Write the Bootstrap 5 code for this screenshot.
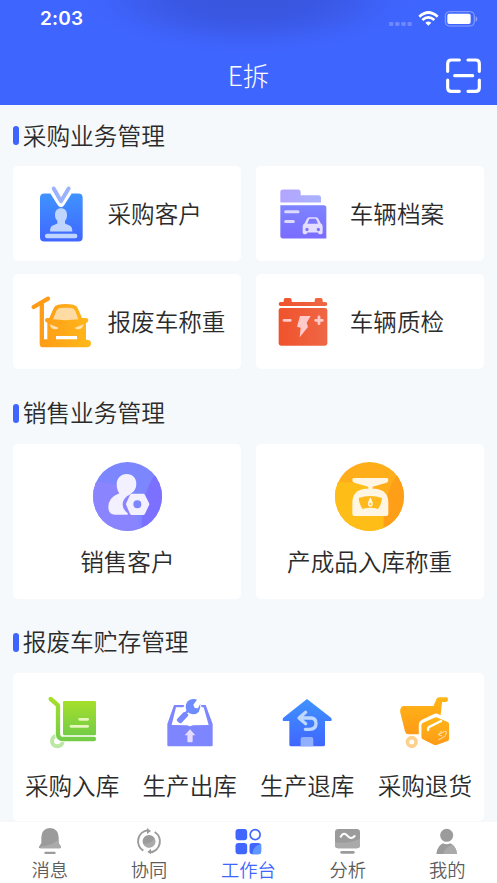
<!DOCTYPE html>
<html lang="zh-CN">
<head>
<meta charset="utf-8">
<meta name="viewport" content="width=device-width, initial-scale=1">
<title>E拆</title>
<link href="https://cdn.jsdelivr.net/npm/bootstrap@5.3.0/dist/css/bootstrap.min.css" rel="stylesheet">
<style>
  body { background: #f5f9fc; color: #2b2b2b; font-family: "Noto Sans CJK SC", sans-serif; font-weight: 350; height: 883px; overflow: hidden; }
  svg { display: block; flex: none; }
  .app-head { height: 105px; color: #fff; background: radial-gradient(ellipse 170px 58px at 248px -4px, #3955dc 0, #3957e2 40%, #3c5def 65%, #3e63fb 85%, #3f65ff 100%) #3f65ff; }
  .status-bar { height: 37px; padding-left: 40px; padding-right: 19px; }
  .clock { font: 600 19px/37px Inter, sans-serif; letter-spacing: .2px; }
  .title-bar { height: 67px; display: grid; grid-template-columns: 1fr auto 1fr; padding: 9px 15px 0; }
  .title-bar h1 { grid-column: 2; font-size: 26.5px; line-height: 58px; font-weight: 300; }
  .title-bar h1 { transform: translateY(-.5px); }
  main { padding: 0 13.3px; height: 717px; overflow: hidden; }
  .sec { height: 61px; font-size: 23.7px; line-height: 61px; font-weight: 350; gap: 4px; }
  .sec span { margin-top: -1px; }
  .sec::before { content: ""; width: 5.4px; height: 19px; border-radius: 3px; background: #3f65ff; }
  .sec-gap { margin-top: 13.5px !important; }
  .sec-low { margin-top: 13px !important; }
  .tiles { display: grid; grid-template-columns: 1fr 1fr; gap: 13.3px 14.2px; }
  .tile { background: #fff; border-radius: 5px; font-size: 23.6px; line-height: 36px; white-space: nowrap; }
  .tile-h { height: 95px; padding-left: 14.7px; gap: 13.5px; }
  .tile-h span { margin-top: -2px; }
  .tile-v { height: 155px; padding-top: 18px; gap: 12.5px; }
  .tile-4 { height: 148px; padding-top: 19px; }
  .tile-4 > div { gap: 15px; }
  .tabs { height: 61px; background: #fff; color: #5c5c5c; font-size: 18.3px; line-height: 26px; padding-top: 4px; }
  .tabs .now { color: #3f65ff; }
</style>
<script src="https://cdn.jsdelivr.net/npm/bootstrap@5.3.0/dist/js/bootstrap.bundle.min.js"></script>
</head>
<body>
<svg width="0" height="0" class="position-absolute" aria-hidden="true">
  <defs>
    <linearGradient id="blue" x1="0" y1="0" x2="0" y2="1"><stop stop-color="#3f93ff"/><stop offset="1" stop-color="#4066ff"/></linearGradient>
    <linearGradient id="violet" x1="0" y1="0" x2="0" y2="1"><stop stop-color="#7d84ff"/><stop offset="1" stop-color="#7a6cff"/></linearGradient>
    <linearGradient id="lilac"><stop stop-color="#b3a5ff"/><stop offset="1" stop-color="#a9b3ff"/></linearGradient>
    <linearGradient id="orange"><stop stop-color="#ff9c17"/><stop offset="1" stop-color="#ffb81a"/></linearGradient>
    <linearGradient id="orangeDown" x1="0" y1="0" x2="0" y2="1"><stop stop-color="#ffb617"/><stop offset="1" stop-color="#ff9a17"/></linearGradient>
    <linearGradient id="red"><stop stop-color="#ef532c"/><stop offset="1" stop-color="#ef6745"/></linearGradient>
    <linearGradient id="green" x1="0" y1="0" x2="0" y2="1"><stop stop-color="#a5df2b"/><stop offset="1" stop-color="#74cd47"/></linearGradient>
    <clipPath id="disc"><circle cx="103.5" cy="103.5" r="103.5"/></clipPath>
  </defs>
</svg>

<header class="app-head">
  <div class="status-bar d-flex justify-content-between align-items-center">
    <span class="clock">2:03</span>
    <svg width="90" height="18" viewBox="424 30 270 54">
      <g fill="#6f89ff"><rect x="427" y="66" width="13" height="12" rx="4"/><rect x="445.500" y="66" width="13" height="12" rx="4"/><rect x="464" y="66" width="13" height="12" rx="4"/><rect x="482.500" y="66" width="13" height="12" rx="4"/></g>
      <g fill="none" stroke="#fff" stroke-width="8"><path d="M518 50Q545 25 573 50M527 60Q545 44 563 60"/></g>
      <path d="M536 68q9-7 18 0l-9 9z" fill="#fff"/>
      <rect x="596" y="35" width="87" height="43" rx="12" fill="none" stroke="#8ea3ff" stroke-width="3"/>
      <rect x="602" y="41" width="70" height="31" rx="6" fill="#fff"/>
      <path d="M687 49q5 2 5 8t-5 8z" fill="#8ea3ff"/>
    </svg>
  </div>
  <div class="title-bar align-items-center">
    <h1 class="m-0">E拆</h1>
    <svg class="ms-auto" width="37" height="37" viewBox="594 170 111 111" fill="none" stroke="#fff" stroke-width="9.500" stroke-linecap="round" stroke-linejoin="round">
      <path d="M602 213v-23q0-11 11-11h24M663 179h23q11 0 11 11v23M697 239v23q0 11-11 11h-23M637 273h-24q-11 0-11-11v-23M623 226h54"/>
    </svg>
  </div>
</header>

<main>
  <h2 class="sec d-flex align-items-center m-0"><span>采购业务管理</span></h2>
  <div class="tiles">
    <div class="tile tile-h d-flex align-items-center">
      <svg width="66" height="66" viewBox="54 61.500 198 198">
        <path d="M103 99h18l23 36q9 10 18 0l23-36h20q13 0 13 13v118q0 13-13 13H103q-13 0-13-13V112q0-13 13-13z" fill="url(#blue)"/>
        <path d="M131 84l22 38 23-38" fill="none" stroke="#9bb2ff" stroke-width="12" stroke-linecap="round" stroke-linejoin="round"/>
        <path d="M135 163c0-13 7-20 18-20s18 7 18 20c0 9-2 14-6 18v8l15 7q7 4 7 17h-67q0-13 7-17l15-7v-8c-5-5-7-9-7-18z" fill="#bfd5ff"/>
        <rect x="105" y="220" width="97" height="13" rx="6" fill="#bfd5ff"/>
      </svg>
      <span>采购客户</span>
    </div>
    <div class="tile tile-h d-flex align-items-center">
      <svg width="66" height="66" viewBox="55 61.500 198 198">
        <path d="M86 126V95q0-8 8-8h45q8 0 8 8v9h53q8 0 8 8v14z" fill="url(#lilac)"/>
        <path d="M86 134h130q8 0 8 8v92H94q-8 0-8-8z" fill="url(#violet)"/>
        <path d="M102 154h37M102 183h23" stroke="#ddd9ff" stroke-width="9" stroke-linecap="round"/>
        <path fill-rule="evenodd" fill="#e3ddff" d="M153 198q0-7 6-10l6-12q2-6 8-6h20q6 0 8 6l6 12q6 3 6 10v18q0 5-5 5h-4q-5 0-5-5h-32q0 5-5 5h-4q-5 0-5-5zM167 190h32l-5-13q-1-2-3-2h-16q-2 0-3 2zM161 207a5 5 0 1 0 10 0a5 5 0 1 0-10 0M195 207a5 5 0 1 0 10 0a5 5 0 1 0-10 0"/>
      </svg>
      <span>车辆档案</span>
    </div>
    <div class="tile tile-h d-flex align-items-center">
      <svg width="66" height="66" viewBox="54 57 198 198">
        <path d="M71 111l43-25" stroke="#ff9c17" stroke-width="13" stroke-linecap="round"/>
        <path fill="url(#orange)" fill-rule="evenodd" d="M89 103l13-7v112h10v-50q-7-1-7-7 0-7 8-7h5l12-28q4-10 14-12 23-4 46 0 10 2 14 12l12 28h11q8 0 8 7 0 6-7 8v50q15-1 15 11 0 12-13 12H100q-11 0-11-11zM138 198v10h63v-10z"/>
        <path d="M129 148l10-25q3-8 11-9 17-2 35 0 8 1 11 9l9 25q-37 5-76 0z" fill="#ffdba4"/>
        <path d="M119 163l26 10q-1 5-9 5-14 0-17-15zM221 163l-26 10q1 5 9 5 14 0 17-15z" fill="#ffe2b4"/>
      </svg>
      <span>报废车称重</span>
    </div>
    <div class="tile tile-h d-flex align-items-center">
      <svg width="66" height="66" viewBox="55 57 198 198">
        <path d="M87 96h9v-6q0-6 6-6h12q6 0 6 6v6h69v-6q0-6 6-6h12q6 0 6 6v6h8q6 0 6 6t-6 6H87q-6 0-6-6t6-6z" fill="url(#red)"/>
        <rect x="81" y="114" width="146" height="113" rx="7" fill="url(#red)"/>
        <path d="M97 151h19M192 151h20M202 141v20" stroke="#ffcac9" stroke-width="8.500" stroke-linecap="round"/>
        <path d="M145 138h32l-12 20 4 13-25 31 3-29-11-3z" fill="#ffcac9"/>
      </svg>
      <span>车辆质检</span>
    </div>
  </div>

  <h2 class="sec sec-gap d-flex align-items-center m-0"><span>销售业务管理</span></h2>
  <div class="tiles">
    <div class="tile tile-v d-flex flex-column align-items-center">
      <svg width="69" height="69" viewBox="0 0 207 207">
        <g clip-path="url(#disc)">
          <path d="M0 0h207v207H0z" fill="#7b86ff"/>
          <path d="M0 60q80-5 122 55l22 92H0z" fill="#8a84fe"/>
          <path d="M207 20q-62 42-61 187h61z" fill="#7b70ff"/>
        </g>
        <path d="M101 36c17 0 29 12 29 29 0 14-6 23-15 29l-5 4c-14 6-21 18-21 30q1 15 15 26 2 4-2 4H64q-18-2-18-23 0-28 33-41c-5-7-8-16-8-27 0-18 12-31 30-31z" fill="#f3f1ff"/>
        <path fill-rule="evenodd" d="M117 95h33q4 0 6 4l12 24q2 4 0 7l-12 25q-2 4-6 4h-33q-4 0-6-4l-11-25q-2-3 0-7l11-24q2-4 6-4zM121 127a12 12 0 1 0 24 0a12 12 0 1 0-24 0" fill="#f3f1ff"/>
      </svg>
      <span>销售客户</span>
    </div>
    <div class="tile tile-v d-flex flex-column align-items-center">
      <svg width="69" height="69" viewBox="0 0 207 207">
        <g clip-path="url(#disc)">
          <path d="M0 0h207v207H0z" fill="#ffae19"/>
          <path d="M0 60q90-4 145 40v107H0z" fill="#ffbd18"/>
          <path d="M207 20q-62 42-61 187h61z" fill="#ff9f18"/>
        </g>
        <path d="M56 48h99q5 0 5 6 0 6-5 8l-42 12v6h8q39 4 39 42v34q0 6-6 6H58q-6 0-6-6v-34q0-38 39-42h9v-6L57 62q-5-2-5-8 0-6 4-6z" fill="#fff5e3"/>
        <path d="M71 108q35-12 70 0-2 20-12 33-23-8-46 0-10-13-12-33z" fill="#ffb91b"/>
        <path fill-rule="evenodd" d="M106 106q9 16 7 23-2 5-7 5t-7-5q-2-7 7-23zM103 126a3 3 0 1 0 6 0a3 3 0 1 0-6 0" fill="#fff5e3"/>
      </svg>
      <span>产成品入库称重</span>
    </div>
  </div>

  <h2 class="sec sec-low d-flex align-items-center m-0"><span>报废车贮存管理</span></h2>
  <div class="tile tile-4 row row-cols-4 g-0 align-content-start">
    <div class="col d-flex flex-column align-items-center">
      <svg width="60" height="60" viewBox="126 216 180 180">
        <circle cx="172" cy="363" r="16" fill="none" stroke="#bce8a5" stroke-width="12"/>
        <path d="M152 237l22 19v85q0 16 16 16h92" fill="none" stroke="#fff" stroke-width="18"/>
        <rect x="189" y="243" width="99" height="103" rx="4" fill="url(#green)"/>
        <path d="M152 237l22 19v85q0 16 16 16h92" fill="none" stroke="url(#green)" stroke-width="13" stroke-linecap="round" stroke-linejoin="round"/>
        <path d="M239 298h24M213 319h50" stroke="#e6f6bd" stroke-width="8.500" stroke-linecap="round"/>
      </svg>
      <span>采购入库</span>
    </div>
    <div class="col d-flex flex-column align-items-center">
      <svg width="60" height="60" viewBox="479 216 180 180">
        <path fill="#7d86ff" fill-rule="evenodd" d="M521 255h31l-3 7h-22l-13 53 46 1q9 5 18 0l47-1-15-53h-6l-2-7h14l21 57v64q0 3-3 3H504q-3 0-3-3v-64z"/>
        <path d="M533 294l15-16q3-3 7-1l7 4q4 3 1 7l-19 20q-3 3-7 1l-7-6q-3-4 3-9z" fill="#7888ff"/>
        <path d="M548 288l18-19" stroke="#7888ff" stroke-width="7"/>
        <path d="M578 237q7-1 12 2l-11 15 4 10 10 1 7-14q2 31-22 32-21-2-22-22 1-22 22-24z" fill="#6f8cff"/>
        <path d="M569 328l16 18h-8v18q0 3-3 3h-10q-3 0-3-3v-18h-8z" fill="#e5dcff"/>
      </svg>
      <span>生产出库</span>
    </div>
    <div class="col d-flex flex-column align-items-center">
      <svg width="60" height="60" viewBox="91 216 180 180">
        <path d="M181 237l72 56q4 4 1 10h-19v71q0 5-5 5H133q-5 0-5-5v-71h-19q-3-6 1-10z" fill="url(#blue)"/>
        <path d="M162 379v-22q0-6 6-6h26q6 0 6 6v22z" fill="#91afff"/>
        <path d="M177 277l-20 17 20 17M159 294h34q15 1 15 16 0 18-19 18h-13" fill="none" stroke="#bdd7ff" stroke-width="10" stroke-linecap="round" stroke-linejoin="round"/>
      </svg>
      <span>生产退库</span>
    </div>
    <div class="col d-flex flex-column align-items-center">
      <svg width="60" height="60" viewBox="443.700 216 180 180">
        <path d="M469 258h90l9-21q2-5 8-5h21q6 0 6 6t-6 8h-12l-11 97h-89q-8 0-11-8l-15-60q0-15 10-17z" fill="url(#orangeDown)"/>
        <path d="M515 380v-67q0-8 8-13l38-18q6-3 12 0l43 22v70l-50 22z" fill="#fff"/>
        <path d="M528 308l34-15q5-2 10 0l30 13q4 2 4 7v43q0 5-4 7l-34 12q-4 1-8-1l-33-16q-4-2-4-7v-36q0-5 5-7z" fill="url(#orangeDown)"/>
        <path d="M543 330v-3q0-5 5-7l34-17" fill="none" stroke="#fff" stroke-width="7" stroke-linecap="round"/>
        <path d="M583 333l-9 11 10 4M575 343l18-9q5-2 5 5-1 11-16 17l-7 3" fill="none" stroke="#ffe0a8" stroke-width="3" stroke-linecap="round"/>
        <circle cx="494" cy="366" r="13" fill="none" stroke="#ffd08a" stroke-width="11"/>
      </svg>
      <span>采购退货</span>
    </div>
  </div>
</main>

<nav class="tabs row row-cols-5 g-0 align-content-start">
  <div class="col d-flex flex-column align-items-center">
    <svg width="30" height="30" viewBox="104 48 90 90" fill="#9b9b9b">
      <path d="M149 54q26 2 26 28v17l7 11q2 5-4 5h-58q-6 0-4-5l7-11V82q0-26 26-28z"/><path d="M121 109q29-2 53-19l1 9 7 11q2 5-4 5h-58z" fill="#aaa"/><rect x="132" y="125" width="34" height="7" rx="3.500"/>
    </svg><span>消息</span>
  </div>
  <div class="col d-flex flex-column align-items-center">
    <svg width="30" height="30" viewBox="402 48 90 90">
      <circle cx="447" cy="94" r="19" fill="#9b9b9b"/><path d="M429 101q21 3 35-16 5 10-1 20-15 16-34-4z" fill="#aaa"/>
      <path d="M430 122a33 33 0 0 1 14-61M464 66a33 33 0 0 1-14 61" fill="none" stroke="#9b9b9b" stroke-width="6"/>
      <path d="M441 54l12 9-12 9zM453 116l-11 10 11 7z" fill="#9b9b9b"/>
    </svg><span>协同</span>
  </div>
  <div class="col now d-flex flex-column align-items-center">
    <svg width="30" height="30" viewBox="700.500 48 90 90" fill="#4066ff">
      <rect x="708" y="57" width="35" height="34" rx="9"/><rect x="708" y="99" width="35" height="34" rx="9"/><rect x="750" y="99" width="35" height="34" rx="9"/>
      <path d="M759 133q0-25 26-31v22q0 9-9 9z" fill="#5f96ff"/><circle cx="767" cy="74" r="15" fill="none" stroke="#4066ff" stroke-width="5"/>
    </svg><span>工作台</span>
  </div>
  <div class="col d-flex flex-column align-items-center">
    <svg width="30" height="30" viewBox="258 48 90 90" fill="#9b9b9b">
      <rect x="264" y="57" width="75" height="58" rx="10"/><path d="M264 97q43 5 75-11v19q0 10-10 10h-55q-10 0-10-10z" fill="#aaa"/><rect x="280" y="123" width="43" height="8" rx="4"/>
      <path d="M281 80q9-16 20-3t22 1" fill="none" stroke="#fff" stroke-width="6" stroke-linecap="round"/>
    </svg><span>分析</span>
  </div>
  <div class="col d-flex flex-column align-items-center">
    <svg width="30" height="30" viewBox="556 48 90 90" fill="#9b9b9b">
      <circle cx="600" cy="76" r="19.500"/><path d="M569 132q2-23 20-32 11 6 22 0 18 8 20 32z"/><path d="M589 132q5-20 28-28 12 9 14 28z" fill="#aaa"/>
    </svg><span>我的</span>
  </div>
</nav>
</body>
</html>
